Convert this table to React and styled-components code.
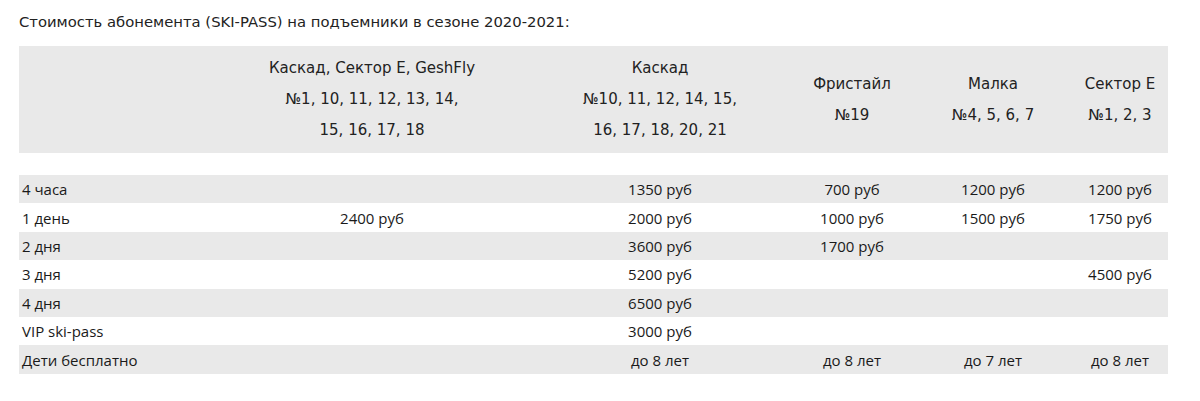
import styled, { createGlobalStyle } from 'styled-components';

const GlobalStyle = createGlobalStyle`
  body {
    margin: 0;
    background: #fff;
    font-family: 'DejaVu Sans', Verdana, sans-serif;
    color: #333;
  }
`;

const Page = styled.div`
  padding: 12px 19px 0;
`;

const Title = styled.h3`
  margin: 0 0 14px;
  font-size: 14.8px;
  font-weight: normal;
  line-height: 20px;
  color: #222;
`;

const Table = styled.table`
  width: 1149px;
  border-collapse: collapse;
  table-layout: fixed;
`;

const HeadCell = styled.th`
  background: #e9e9e9;
  padding: 7px 0;
  font-size: 15px;
  font-weight: normal;
  line-height: 31px;
  text-align: center;
  vertical-align: middle;
  color: #222;
`;

const Spacer = styled.td`
  height: 22px;
  padding: 0;
`;

const Row = styled.tr`
  background: ${(p) => (p.$shaded ? '#e9e9e9' : '#fff')};
`;

const Cell = styled.td`
  height: 28.4px;
  padding: 0;
  font-family: 'Open Sans', 'Noto Sans', sans-serif;
  font-size: 15px;
  line-height: 20px;
  color: #1a1a1a;
  text-align: ${(p) => (p.$label ? 'left' : 'center')};
  padding-left: ${(p) => (p.$label ? '3px' : '0')};
  vertical-align: middle;
`;

const widths = [195, 316, 260, 124, 158, 96];

const headers = [
  [],
  ['Каскад, Сектор E, GeshFly', '№1, 10, 11, 12, 13, 14,', '15, 16, 17, 18'],
  ['Каскад', '№10, 11, 12, 14, 15,', '16, 17, 18, 20, 21'],
  ['Фристайл', '№19'],
  ['Малка', '№4, 5, 6, 7'],
  ['Сектор E', '№1, 2, 3'],
];

const rows = [
  ['4 часа', '', '1350 руб', '700 руб', '1200 руб', '1200 руб'],
  ['1 день', '2400 руб', '2000 руб', '1000 руб', '1500 руб', '1750 руб'],
  ['2 дня', '', '3600 руб', '1700 руб', '', ''],
  ['3 дня', '', '5200 руб', '', '', '4500 руб'],
  ['4 дня', '', '6500 руб', '', '', ''],
  ['VIP ski-pass', '', '3000 руб', '', '', ''],
  ['Дети бесплатно', '', 'до 8 лет', 'до 8 лет', 'до 7 лет', 'до 8 лет'],
];

export default function App() {
  return (
    <Page>
      <GlobalStyle />
      <Title>Стоимость абонемента (SKI-PASS) на подъемники в сезоне 2020-2021:</Title>
      <Table>
        <colgroup>
          {widths.map((w, i) => (
            <col key={i} style={{ width: w }} />
          ))}
        </colgroup>
        <thead>
          <tr>
            {headers.map((lines, i) => (
              <HeadCell key={i}>
                {lines.map((l, j) => (
                  <div key={j}>{l}</div>
                ))}
              </HeadCell>
            ))}
          </tr>
        </thead>
        <tbody>
          <tr>
            <Spacer colSpan={6} />
          </tr>
          {rows.map((r, i) => (
            <Row key={i} $shaded={i % 2 === 0}>
              {r.map((v, j) => (
                <Cell key={j} $label={j === 0}>
                  {v}
                </Cell>
              ))}
            </Row>
          ))}
        </tbody>
      </Table>
    </Page>
  );
}
